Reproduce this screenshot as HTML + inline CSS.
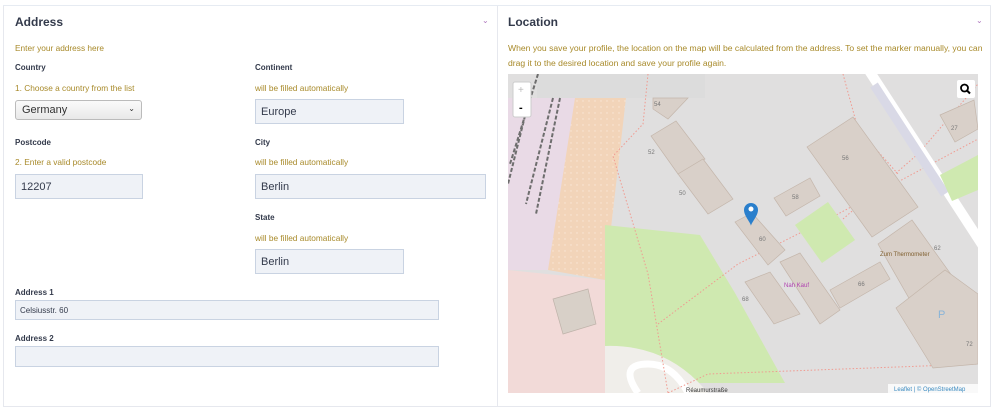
<!DOCTYPE html>
<html><head><meta charset="utf-8"><style>
*{margin:0;padding:0;box-sizing:border-box}
body{width:1000px;height:415px;background:#fff;font-family:"Liberation Sans",sans-serif;position:relative;overflow:hidden}
.a{position:absolute;white-space:nowrap}
.h{font-size:12px;font-weight:bold;color:#333a4b}
.l{font-size:8px;font-weight:bold;color:#333a4b}
.g{font-size:8.3px;color:#a88a2a}
.in{position:absolute;background:#eff2f7;border:1px solid #c9d3e2;font-size:11px;color:#333a4b;padding-left:5px;display:flex;align-items:center}
.chev{position:absolute;color:#b07ac0;font-size:8px}
</style></head><body>
<div class="a" style="left:3px;top:0;width:988px;height:6px;border-bottom:1px solid #e6ebf2"></div>
<div class="a" style="left:3px;top:6px;width:988px;height:401px;border:1px solid #e6e8ee;border-top:none"></div>
<div class="a" style="left:497px;top:6px;width:1px;height:401px;background:#e6e8ee"></div>

<div class="a h" style="left:15px;top:15px">Address</div>
<div class="chev" style="left:482px;top:16px">&#8964;</div>
<div class="a g" style="left:15px;top:43px">Enter your address here</div>
<div class="a l" style="left:15px;top:63px">Country</div>
<div class="a g" style="left:15px;top:83px">1. Choose a country from the list</div>
<div class="a" style="left:15px;top:100px;width:127px;height:20px;border:1px solid #bbb;border-radius:3px;background:linear-gradient(#fafafa,#e9e9e9);font-size:11px;color:#333;padding:3px 0 0 6px">Germany<span style="position:absolute;right:6px;top:3px;font-size:8px">&#8964;</span></div>
<div class="a l" style="left:255px;top:63px">Continent</div>
<div class="a g" style="left:255px;top:83px">will be filled automatically</div>
<div class="in" style="left:255px;top:99px;width:149px;height:25px">Europe</div>
<div class="a l" style="left:15px;top:138px">Postcode</div>
<div class="a g" style="left:15px;top:157px">2. Enter a valid postcode</div>
<div class="in" style="left:15px;top:174px;width:128px;height:25px">12207</div>
<div class="a l" style="left:255px;top:138px">City</div>
<div class="a g" style="left:255px;top:157px">will be filled automatically</div>
<div class="in" style="left:255px;top:174px;width:231px;height:25px">Berlin</div>
<div class="a l" style="left:255px;top:213px">State</div>
<div class="a g" style="left:255px;top:233px">will be filled automatically</div>
<div class="in" style="left:255px;top:249px;width:149px;height:25px">Berlin</div>
<div class="a l" style="left:15px;top:288px">Address 1</div>
<div class="in" style="left:15px;top:300px;width:424px;height:20px;font-size:8px;padding-left:4px">Celsiusstr. 60</div>
<div class="a l" style="left:15px;top:334px">Address 2</div>
<div class="in" style="left:15px;top:346px;width:424px;height:21px"></div>

<div class="a h" style="left:508px;top:15px">Location</div>
<div class="chev" style="left:976px;top:16px">&#8964;</div>
<div class="a g" style="left:508px;top:43px;font-size:8.6px">When you save your profile, the location on the map will be calculated from the address. To set the marker manually, you can</div>
<div class="a g" style="left:508px;top:58px;font-size:8.6px">drag it to the desired location and save your profile again.</div>

<svg class="a" style="left:508px;top:74px" width="470" height="319" viewBox="0 0 470 319">
<defs><pattern id="dt" width="6" height="6" patternUnits="userSpaceOnUse"><rect width="6" height="6" fill="#f2d4b9"/><circle cx="3" cy="3" r=".7" fill="#fae8d8"/></pattern></defs>
<rect width="470" height="319" fill="#e0dfdf"/>
<rect x="29" y="0" width="168" height="24" fill="#dcdcdc"/>
<polygon points="0,24 75,24 40,196 0,196" fill="#e9dae6"/>
<polygon points="67,24 118,24 97,206 40,196" fill="url(#dt)"/>
<polygon points="0,196 97,206 97,319 0,319" fill="#f2dad8"/>
<polygon points="45,225 80,215 88,250 55,260" fill="#d8d0c8" stroke="#bfb3aa" stroke-width=".7"/>
<polygon points="97,151 192,161 227,219 277,309 97,309 97,272" fill="#cfe9b0"/>
<path d="M97,272 Q160,270 200,319 L97,319Z" fill="#f0eeea"/>
<path d="M130,319 Q110,290 140,290 Q165,290 180,319" fill="none" stroke="#fff" stroke-width="7"/>
<path d="M30,0 L2,90 M45,24 L18,130 M52,24 L28,140 M20,30 L0,110" stroke="#6e6e6e" stroke-width="2" stroke-dasharray="4 2" fill="none"/>
<path d="M140,0 L135,50 L105,82 L140,200 L160,319" stroke="#f09a90" stroke-width="1" stroke-dasharray="1.5 2" fill="none"/>
<path d="M150,250 L230,190 L330,140 L470,65" stroke="#f09a90" stroke-width="1" stroke-dasharray="1.5 2" fill="none"/>
<path d="M160,319 L200,300 L470,290 M335,145 L410,80 L470,10 M335,0 L350,55 L390,100" stroke="#f09a90" stroke-width="1" stroke-dasharray="1.5 2" fill="none"/>
<line x1="360" y1="-5" x2="475" y2="172" stroke="#fff" stroke-width="10"/>
<line x1="366" y1="11" x2="437" y2="120" stroke="#d9d9e6" stroke-width="9"/>
<g fill="#d9d0c9" stroke="#c4b6ab" stroke-width=".7">
<polygon points="145,24 180,24 160,45 145,35"/>
<polygon points="143,62 168,47 197,85 170,100"/>
<polygon points="170,100 195,85 225,125 200,140"/>
<polygon points="299,73 345,43 410,133 364,163"/>
<polygon points="266,124 302,104 312,122 278,142"/>
<polygon points="227,148 244,139 277,176 260,191"/>
<polygon points="237,208 262,198 292,240 266,250"/>
<polygon points="272,188 292,179 332,236 312,250"/>
<polygon points="322,216 372,188 382,205 332,234"/>
<polygon points="370,170 404,146 452,213 410,240"/>
<polygon points="388,234 437,196 470,220 470,290 425,294"/>
<polygon points="432,41 466,26 470,55 447,68"/>
</g>
<polygon points="287,151 320,128 347,166 314,189" fill="#cfe9b0"/>
<polygon points="432,101 470,81 470,116 444,127" fill="#cfe9b0"/>
<g font-family="Liberation Sans,sans-serif" font-size="6" fill="#777">
<text x="146" y="32">54</text><text x="140" y="80">52</text><text x="171" y="121">50</text><text x="334" y="86">56</text><text x="284" y="125">58</text><text x="251" y="167">60</text><text x="234" y="227">68</text><text x="350" y="212">66</text><text x="426" y="176">62</text><text x="458" y="272">72</text><text x="443" y="56">27</text>
<text x="372" y="182" fill="#806030">Zum Thermometer</text>
<text x="276" y="213" fill="#b040b0">Nah Kauf</text>
<text x="430" y="244" font-size="11" fill="#8ab4d8">P</text>
<text x="178" y="318" fill="#333">Réaumurstraße</text>
</g>
<path d="M236,136 a7,7 0 0 1 14,0 c0,6 -7,13 -7,16 c0,-3 -7,-10 -7,-16z" fill="#2a7fcc"/>
<circle cx="243" cy="135" r="2.5" fill="#fff"/>
<rect x="5" y="8" width="18" height="35" rx="2" fill="#fff" stroke="#ccc"/>
<text x="10" y="19" font-size="10" fill="#bbb" font-family="Liberation Sans">+</text>
<text x="11" y="37" font-size="11" font-weight="bold" fill="#000" font-family="Liberation Sans">-</text>
<rect x="449" y="6" width="18" height="18" rx="2" fill="#fff"/>
<circle cx="456.5" cy="14" r="3.5" fill="none" stroke="#000" stroke-width="1.8"/><line x1="459" y1="16.5" x2="462" y2="19.5" stroke="#000" stroke-width="2"/>
<rect x="380" y="310" width="90" height="9" fill="#fff" opacity=".8"/>
<text x="386" y="317" font-size="6" fill="#3a8ac0" font-family="Liberation Sans">Leaflet | © OpenStreetMap</text>
</svg>
</body></html>
